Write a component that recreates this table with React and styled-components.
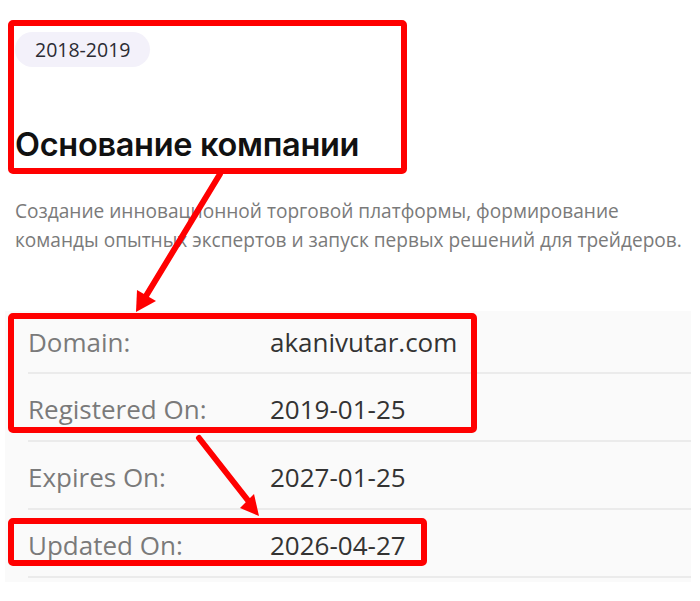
import React from "react";
import styled, { createGlobalStyle } from "styled-components";

const Global = createGlobalStyle`
  html, body { margin: 0; padding: 0; background: #ffffff; }
  body { width: 700px; height: 601px; overflow: hidden; }
`;

const Page = styled.div`
  position: relative;
  width: 700px;
  height: 601px;
  box-sizing: border-box;
  padding: 32px 0 0 15px;
  font-family: "Open Sans", "Noto Sans", sans-serif;
`;

const Badge = styled.div`
  display: flex;
  align-items: center;
  width: fit-content;
  height: 35px;
  padding: 0 20px;
  border-radius: 18px;
  background: #f3f1fa;
  color: #2b2b33;
  font-size: 19.5px;
`;

const Heading = styled.h2`
  margin: 58px 0 0 0;
  font-family: "Inter", "Noto Sans", sans-serif;
  font-weight: 600;
  font-size: 32.5px;
  line-height: 40px;
  color: #111111;
  letter-spacing: -0.3px;
`;

const Lead = styled.p`
  margin: 32px 0 0 0;
  width: 682px;
  font-size: 19.1px;
  line-height: 29px;
  color: #7a7a7a;
`;

const Panel = styled.div`
  margin: 56px 0 0 -10px;
  width: 686px;
  background: #fafafa;
  padding: 0 0 4px 23px;
  box-sizing: border-box;
`;

const Row = styled.div`
  display: grid;
  grid-template-columns: 242px 1fr;
  align-items: center;
  height: ${(p) => (p.$first ? 63 : 68)}px;
  box-sizing: border-box;
  padding-top: ${(p) => (p.$first ? 0 : 4)}px;
  border-bottom: 2px solid #ebebeb;
  font-size: 26px;
`;

const Label = styled.span`
  color: #7a7a7a;
`;

const Value = styled.span`
  color: #333333;
`;

const Overlay = styled.svg`
  position: absolute;
  left: 0;
  top: 0;
  pointer-events: none;
`;

const rows = [
  ["Domain:", "akanivutar.com"],
  ["Registered On:", "2019-01-25"],
  ["Expires On:", "2027-01-25"],
  ["Updated On:", "2026-04-27"],
];

export default function App() {
  return (
    <>
      <Global />
      <Page>
        <Badge>2018-2019</Badge>
        <Heading>Основание компании</Heading>
        <Lead>
          Создание инновационной торговой платформы, формирование команды
          опытных экспертов и запуск первых решений для трейдеров.
        </Lead>
        <Panel>
          {rows.map(([l, v], i) => (
            <Row key={l} $first={i === 0}>
              <Label>{l}</Label>
              <Value>{v}</Value>
            </Row>
          ))}
        </Panel>
        <Overlay width="700" height="601" viewBox="0 0 700 601">
          <g fill="none" stroke="#ff0000" strokeWidth="6" strokeLinejoin="round">
            <rect x="11" y="23" width="393" height="148" rx="2" />
            <rect x="11" y="316" width="463" height="114" rx="2" />
            <rect x="11" y="521" width="413" height="42" rx="2" />
          </g>
          <g stroke="#ff0000" strokeWidth="6" strokeLinecap="round">
            <line x1="220" y1="174" x2="146" y2="296" />
            <line x1="199" y1="438" x2="250" y2="503" />
          </g>
          <g fill="#ff0000">
            <polygon points="136,312 137,290 156,301" />
            <polygon points="259,516 240,508 254,494" />
          </g>
        </Overlay>
      </Page>
    </>
  );
}
